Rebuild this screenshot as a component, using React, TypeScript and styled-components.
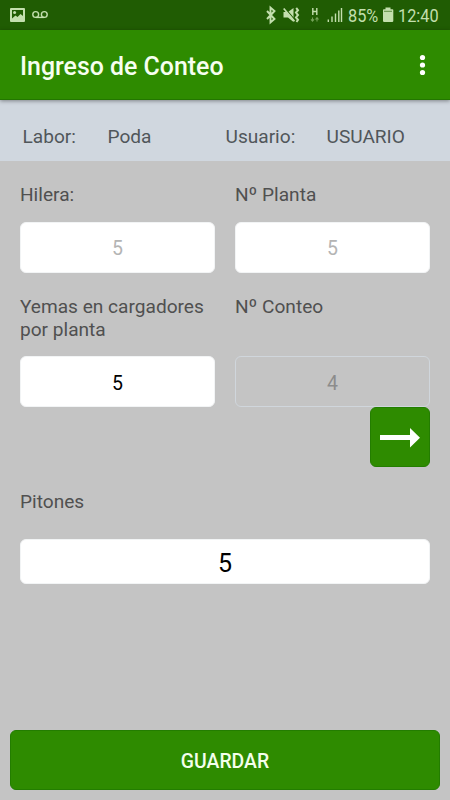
import React from "react";
import styled, { createGlobalStyle } from "styled-components";

const GREEN = "#2e8b00";
const DARK_GREEN = "#205c03";
const TINT = "#c3dfae";

const GlobalStyle = createGlobalStyle`
  * { box-sizing: border-box; }
  html, body { margin: 0; padding: 0; background: #c4c4c4; }
  body, input, button { font-family: Roboto, "Noto Sans", sans-serif; }
`;

const Screen = styled.div`
  width: 450px;
  height: 800px;
  display: flex;
  flex-direction: column;
  background: #c4c4c4;
  overflow: hidden;
`;

const StatusBar = styled.div`
  height: 30px;
  flex: none;
  display: flex;
  align-items: center;
  justify-content: space-between;
  background: ${DARK_GREEN};
  color: ${TINT};
`;

const StatusIcons = styled.svg`
  display: block;
  flex: none;
`;

const StatusGroup = styled.div`
  display: flex;
  align-items: center;
  height: 30px;
`;

const StatusText = styled.span<{ $width: number }>`
  width: ${(p) => p.$width}px;
  font-size: 18px;
  line-height: 30px;
  padding-top: 1px;
  white-space: nowrap;
  transform: scaleX(0.905);
  transform-origin: left center;
`;

const AppBar = styled.header`
  height: 70px;
  flex: none;
  display: flex;
  align-items: center;
  justify-content: space-between;
  padding: 1px 20px 0;
  background: ${GREEN};
  border-bottom: 1px solid #237600;
  box-shadow: 0 1px 4px rgba(0, 0, 0, 0.4);
  z-index: 1;
`;

const Title = styled.h1`
  margin: 0;
  padding-top: 4px;
  font-size: 24.9px;
  line-height: 30px;
  font-weight: 500;
  color: #f6fff0;
`;

const MenuButton = styled.button`
  border: 0;
  padding: 0;
  background: none;
  width: 15px;
  height: 30px;
`;

const InfoBar = styled.div`
  height: 61px;
  flex: none;
  display: grid;
  grid-template-columns: 85px 118px 101px 1fr;
  padding: 26px 0 0 22.5px;
  background: #d0d7df;
  color: #50565a;
  font-size: 19.1px;
  line-height: 22.5px;
`;

const Form = styled.main`
  flex: 1;
  display: flex;
  flex-direction: column;
  padding: 22px 20px 0;
`;

const Row = styled.div<{ $height: number }>`
  display: grid;
  grid-template-columns: 195px 195px;
  column-gap: 20px;
  height: ${(p) => p.$height}px;

  & + & {
    margin-top: 22px;
  }
`;

const Field = styled.label`
  display: flex;
  flex-direction: column;
  justify-content: space-between;
  height: 100%;
`;

const Label = styled.span`
  font-size: 19.1px;
  line-height: 23px;
  color: #505050;
`;

const Input = styled.input<{
  $variant?: "hint" | "outline" | "value";
  $large?: boolean;
}>`
  width: 100%;
  height: ${(p) => (p.$large ? 45 : 51)}px;
  padding: ${(p) => (p.$large || p.$variant !== "hint" ? 3 : 1)}px 0 0;
  border: 1px solid ${(p) => (p.$variant === "outline" ? "#d0d6dc" : "#f2f4f5")};
  border-radius: 6px;
  outline: 0;
  text-align: center;
  font-size: ${(p) => (p.$large ? 25 : 19.5)}px;
  background: ${(p) => (p.$variant === "outline" ? "transparent" : "#fff")};
  color: ${(p) =>
    p.$variant === "hint" ? "#b4b4b4" : p.$variant === "outline" ? "#8c8c8c" : "#000"};
`;

const NextButton = styled.button`
  align-self: flex-end;
  width: 60px;
  height: 60px;
  flex: none;
  padding: 0;
  border: 1px solid #237d00;
  border-radius: 6px;
  background: ${GREEN};
`;

const Block = styled.div`
  height: 94px;
  margin-top: 23px;
`;

const Footer = styled.footer`
  flex: none;
  height: 70px;
  padding: 0 10px 10px;
`;

const SaveButton = styled.button`
  width: 100%;
  height: 60px;
  padding: 3px 0 0;
  border: 1px solid #237d00;
  border-radius: 6px;
  background: ${GREEN};
  color: #f4ffec;
  font-size: 19.4px;
  font-weight: 500;
`;

export default function App() {
  return (
    <>
      <GlobalStyle />
      <Screen>
        <StatusBar>
          <StatusIcons width="60" height="30" fill="none">
            <path
              fill={TINT}
              fillRule="evenodd"
              d="M11 8h13q1 0 1 1v12q0 1-1 1H11q-1 0-1-1V9q0-1 1-1Zm1 2v8.5l3.5-3 2 1.5 3-3 2.5 2V10Z"
            />
            <circle cx="14.6" cy="12.6" r="1.5" fill={TINT} />
            <g stroke={TINT} strokeWidth="1.4">
              <circle cx="35.7" cy="14.5" r="2.9" />
              <circle cx="44.3" cy="14.5" r="2.9" />
              <path d="M35.7 17.4h8.6" />
            </g>
          </StatusIcons>
          <StatusGroup>
            <StatusIcons width="86" height="30" viewBox="262 0 86 30" fill="none">
              <path d="M267 11l7.5 8-4 3.5V7.5l4 3.5-7.5 8" stroke={TINT} strokeWidth="1.9" />
              <path d="M283.5 12h4.5l5.5-4v14l-5.5-4.5h-4.5z" fill={TINT} />
              <path d="M285 8.3l10 11.5" stroke={DARK_GREEN} strokeWidth="1.2" />
              <path d="M283.7 8.5l10.8 12.7" stroke={TINT} strokeWidth="1.7" />
              <path
                d="M296.2 8l1.8 2.2-2 2.4 2 2.4-2 2.4 2 2.4-1.5 2.2"
                stroke={TINT}
                strokeWidth="2"
              />
              <path d="M312.8 8v7M316.8 8v7M313 11.5h4" stroke={TINT} strokeWidth="1.4" />
              <path
                d="M312.5 17.5v3.5M311 19.3l1.5 1.8 1.5-1.8M317 21.5V18M315.5 19.5l1.5-1.8 1.5 1.8"
                stroke="#76a35a"
                strokeWidth="1.1"
              />
              <path
                d="M328.3 22v-2.5M332 22v-5.5M335.5 22v-8.5M338.8 22v-11.5M341.5 22V8"
                stroke={TINT}
                strokeWidth="1.4"
              />
            </StatusIcons>
            <StatusText $width={34}>85%</StatusText>
            <StatusIcons width="16" height="30">
              <path
                d="M3.5 7.5h5v1.8h2q.8 0 .8.8v11q0 .8-.8.8H1.8q-.8 0-.8-.8v-11q0-.8.8-.8h1.7Z"
                fill={TINT}
              />
              <path d="M2 11.3h8" stroke="#5e8e43" strokeWidth="1" />
            </StatusIcons>
            <StatusText $width={52}>12:40</StatusText>
          </StatusGroup>
        </StatusBar>

        <AppBar>
          <Title>Ingreso de Conteo</Title>
          <MenuButton aria-label="Menu">
            <svg width="15" height="30" fill="#fff" display="block">
              <circle cx="7.5" cy="7.5" r="2.6" />
              <circle cx="7.5" cy="15" r="2.6" />
              <circle cx="7.5" cy="22.5" r="2.6" />
            </svg>
          </MenuButton>
        </AppBar>

        <InfoBar>
          <span>Labor:</span>
          <span>Poda</span>
          <span>Usuario:</span>
          <span>USUARIO</span>
        </InfoBar>

        <Form>
          <Row $height={90}>
            <Field>
              <Label>Hilera:</Label>
              <Input $variant="hint" defaultValue="5" />
            </Field>
            <Field>
              <Label>Nº Planta</Label>
              <Input $variant="hint" defaultValue="5" />
            </Field>
          </Row>
          <Row $height={112}>
            <Field>
              <Label>Yemas en cargadores por planta</Label>
              <Input $variant="value" defaultValue="5" />
            </Field>
            <Field>
              <Label>Nº Conteo</Label>
              <Input $variant="outline" defaultValue="4" readOnly />
            </Field>
          </Row>
          <NextButton aria-label="Siguiente">
            <svg width="58" height="58" display="block">
              <path d="M9 27h30v-7l10 9.7-10 9.8V32H9Z" fill="#fff" />
            </svg>
          </NextButton>
          <Block>
            <Field>
              <Label>Pitones</Label>
              <Input $large defaultValue="5" />
            </Field>
          </Block>
        </Form>

        <Footer>
          <SaveButton>GUARDAR</SaveButton>
        </Footer>
      </Screen>
    </>
  );
}
